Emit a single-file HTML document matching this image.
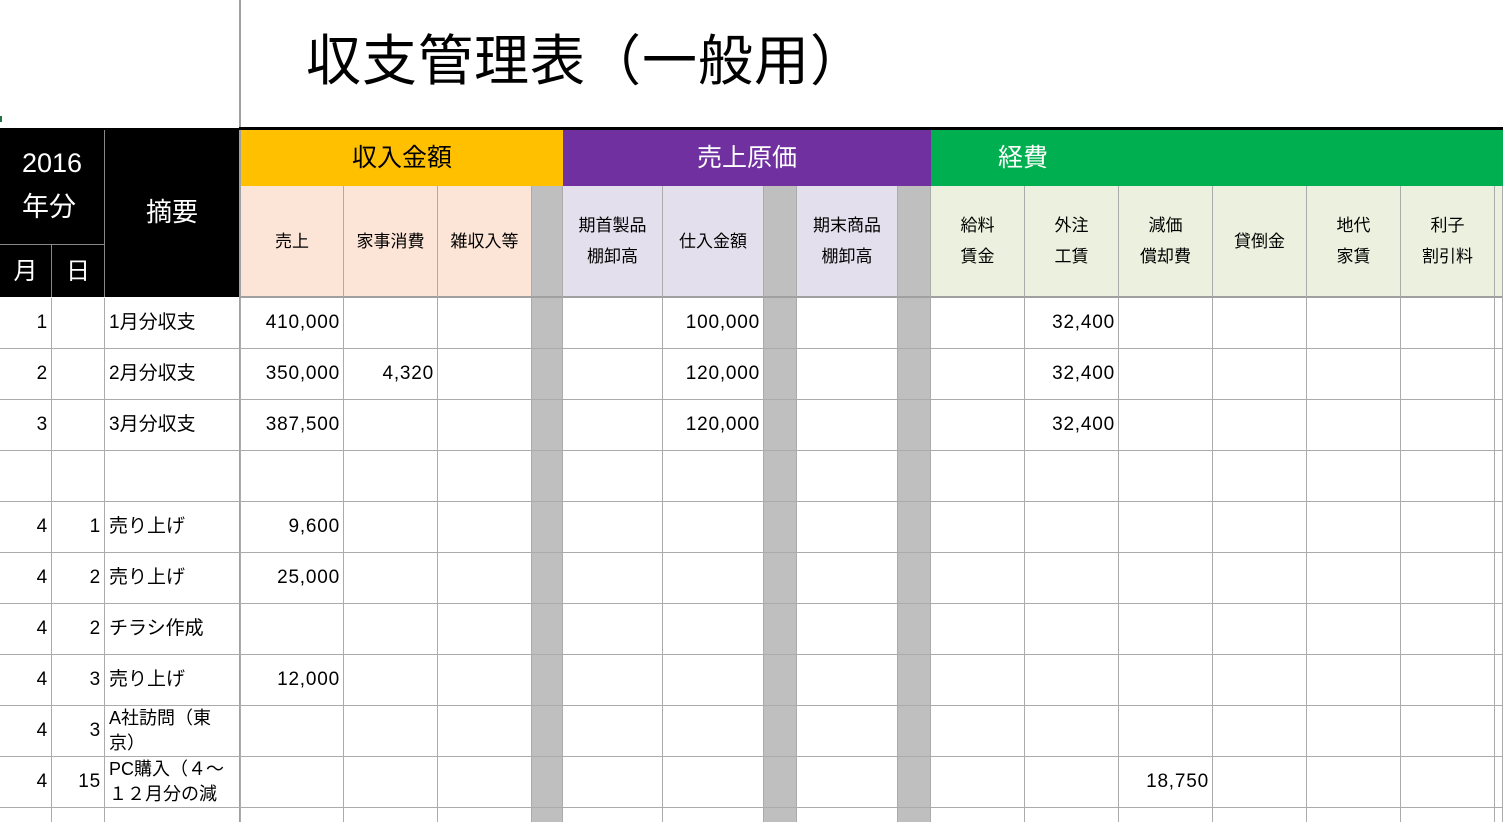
<!DOCTYPE html>
<html style="width:1503px;height:822px;overflow:hidden"><head><meta charset="utf-8"><style>
*{margin:0;padding:0;box-sizing:border-box}
body{width:1503px;height:822px;overflow:hidden;background:#fff;position:relative;font-family:"Liberation Sans","Noto Sans CJK JP",sans-serif;color:#000}
div{position:absolute}
.c{border-right:1px solid #ababab;border-bottom:1px solid #ababab;font-size:19px;line-height:50px;white-space:nowrap;overflow:hidden}
.r{text-align:right;padding-right:3px;letter-spacing:0.8px}
.l{padding-left:4px}
.g{background:#bfbfbf}
.h{display:flex;align-items:center;justify-content:center;text-align:center;font-size:17px;line-height:31px;border-right:1px solid #ababab;border-bottom:2px solid #a0a0a0}
.band{display:flex;align-items:center;font-size:25px;top:128px;height:54px}
.k{background:#000;color:#fff;display:flex;align-items:center;justify-content:center}
.two{line-height:25px;white-space:normal;font-size:18px;padding-top:0}
</style></head><body>
<div style="left:306px;top:26px;font-size:55px;line-height:70px;letter-spacing:1px">収支管理表（一般用）</div>
<div style="left:239px;top:0;width:2px;height:822px;background:#a0a0a0"></div>
<div style="left:0;top:116px;width:2px;height:6px;background:#217346"></div>
<div style="left:239px;top:127px;width:1264px;height:3px;background:#000"></div>
<div style="left:0;top:128px;width:239px;height:169px;background:#000"></div>
<div class="k" style="left:0;top:130px;width:104px;height:110px;font-size:27px;line-height:44px;flex-direction:column">2016<br>年分</div>
<div style="left:104px;top:130px;width:1px;height:167px;background:#888"></div>
<div style="left:0;top:244px;width:104px;height:1px;background:#888"></div>
<div style="left:51px;top:245px;width:1px;height:52px;background:#888"></div>
<div class="k" style="left:105px;top:130px;width:134px;height:160px;font-size:26px">摘要</div>
<div class="k" style="left:0;top:245px;width:51px;height:46px;font-size:24px">月</div>
<div class="k" style="left:52px;top:245px;width:52px;height:46px;font-size:24px">日</div>
<div class="band" style="left:241px;width:322px;background:#ffc000;justify-content:center;top:130px;height:56px;padding-bottom:5px">収入金額</div>
<div class="band" style="left:563px;width:368px;background:#7030a0;color:#fff;justify-content:center;top:130px;height:56px;padding-bottom:5px">売上原価</div>
<div class="band" style="left:931px;width:572px;background:#00b050;color:#fff;padding-left:67px;top:130px;height:56px;padding-bottom:5px">経費</div>
<div class="h" style="left:241px;top:186px;width:103px;height:112px;background:#fce4d6">売上</div>
<div class="h" style="left:344px;top:186px;width:94px;height:112px;background:#fce4d6">家事消費</div>
<div class="h" style="left:438px;top:186px;width:94px;height:112px;background:#fce4d6">雑収入等</div>
<div class="h g" style="left:532px;top:186px;width:31px;height:112px"></div>
<div class="h" style="left:563px;top:186px;width:100px;height:112px;background:#e4dfec">期首製品<br>棚卸高</div>
<div class="h" style="left:663px;top:186px;width:101px;height:112px;background:#e4dfec">仕入金額</div>
<div class="h g" style="left:764px;top:186px;width:33px;height:112px"></div>
<div class="h" style="left:797px;top:186px;width:101px;height:112px;background:#e4dfec">期末商品<br>棚卸高</div>
<div class="h g" style="left:898px;top:186px;width:33px;height:112px"></div>
<div class="h" style="left:931px;top:186px;width:94px;height:112px;background:#ebf1de">給料<br>賃金</div>
<div class="h" style="left:1025px;top:186px;width:94px;height:112px;background:#ebf1de">外注<br>工賃</div>
<div class="h" style="left:1119px;top:186px;width:94px;height:112px;background:#ebf1de">減価<br>償却費</div>
<div class="h" style="left:1213px;top:186px;width:94px;height:112px;background:#ebf1de">貸倒金</div>
<div class="h" style="left:1307px;top:186px;width:94px;height:112px;background:#ebf1de">地代<br>家賃</div>
<div class="h" style="left:1401px;top:186px;width:94px;height:112px;background:#ebf1de">利子<br>割引料</div>
<div class="h" style="left:1495px;top:186px;width:8px;height:112px;background:#ebf1de"></div>
<div id="d"></div>
<script>
var L=[0,52,105,241,344,438,532,563,663,764,797,898,931,1025,1119,1213,1307,1401,1495,1503];
var rows=[
["1","","1月分収支","410,000","","","","","100,000","","","","","32,400"],
["2","","2月分収支","350,000","4,320","","","","120,000","","","","","32,400"],
["3","","3月分収支","387,500","","","","","120,000","","","","","32,400"],
[],
["4","1","売り上げ","9,600"],
["4","2","売り上げ","25,000"],
["4","2","チラシ作成"],
["4","3","売り上げ","12,000"],
["4","3","A社訪問（東<br>京）"],
["4","15","PC購入（４～<br>１２月分の減","","","","","","","","","","","","18,750"],
[]
];
var h="";
for(var i=0;i<rows.length;i++){var t=298+51*i;for(var j=0;j<L.length-1;j++){
var v=rows[i][j]||"";var cls="c";
if(j==6||j==9||j==11)cls+=" g";
if(j==2)cls+=" l";else cls+=" r";
if(v.indexOf("<br>")>=0)cls+=" two";
h+='<div class="'+cls+'" style="left:'+L[j]+'px;top:'+t+'px;width:'+(L[j+1]-L[j])+'px;height:51px">'+v+'</div>';}}
document.getElementById("d").innerHTML=h;
</script>
</body></html>
